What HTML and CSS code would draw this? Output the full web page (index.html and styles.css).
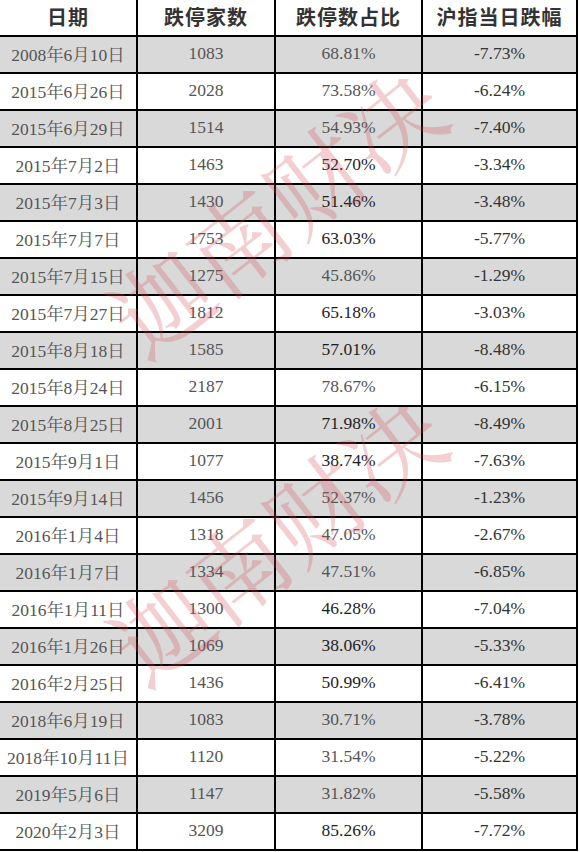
FILE: index.html
```html
<!DOCTYPE html>
<html lang="zh-CN">
<head>
    <meta charset="UTF-8">
    <title>跌停家数统计</title>
    <link rel="stylesheet" href="styles.css">
</head>
<body>
<div class="wrap">
    <div class="grid">
        <div class="th">日期</div>
        <div class="th">跌停家数</div>
        <div class="th">跌停数占比</div>
        <div class="th">沪指当日跌幅</div>

        <div class="td g">2008年6月10日</div><div class="td g">1083</div><div class="td g">68.81%</div><div class="td g">-7.73%</div>
        <div class="td">2015年6月26日</div><div class="td">2028</div><div class="td">73.58%</div><div class="td">-6.24%</div>
        <div class="td g">2015年6月29日</div><div class="td g">1514</div><div class="td g">54.93%</div><div class="td g">-7.40%</div>
        <div class="td">2015年7月2日</div><div class="td">1463</div><div class="td dk">52.70%</div><div class="td">-3.34%</div>
        <div class="td g">2015年7月3日</div><div class="td g">1430</div><div class="td g dk">51.46%</div><div class="td g">-3.48%</div>
        <div class="td">2015年7月7日</div><div class="td">1753</div><div class="td dk">63.03%</div><div class="td">-5.77%</div>
        <div class="td g">2015年7月15日</div><div class="td g">1275</div><div class="td g">45.86%</div><div class="td g">-1.29%</div>
        <div class="td">2015年7月27日</div><div class="td">1812</div><div class="td dk">65.18%</div><div class="td">-3.03%</div>
        <div class="td g">2015年8月18日</div><div class="td g">1585</div><div class="td g dk">57.01%</div><div class="td g">-8.48%</div>
        <div class="td">2015年8月24日</div><div class="td">2187</div><div class="td">78.67%</div><div class="td">-6.15%</div>
        <div class="td g">2015年8月25日</div><div class="td g">2001</div><div class="td g dk">71.98%</div><div class="td g">-8.49%</div>
        <div class="td">2015年9月1日</div><div class="td">1077</div><div class="td dk">38.74%</div><div class="td">-7.63%</div>
        <div class="td g">2015年9月14日</div><div class="td g">1456</div><div class="td g">52.37%</div><div class="td g">-1.23%</div>
        <div class="td">2016年1月4日</div><div class="td">1318</div><div class="td">47.05%</div><div class="td">-2.67%</div>
        <div class="td g">2016年1月7日</div><div class="td g">1334</div><div class="td g">47.51%</div><div class="td g">-6.85%</div>
        <div class="td">2016年1月11日</div><div class="td">1300</div><div class="td dk">46.28%</div><div class="td">-7.04%</div>
        <div class="td g">2016年1月26日</div><div class="td g">1069</div><div class="td g dk">38.06%</div><div class="td g">-5.33%</div>
        <div class="td">2016年2月25日</div><div class="td">1436</div><div class="td dk">50.99%</div><div class="td">-6.41%</div>
        <div class="td g">2018年6月19日</div><div class="td g">1083</div><div class="td g">30.71%</div><div class="td g">-3.78%</div>
        <div class="td">2018年10月11日</div><div class="td">1120</div><div class="td">31.54%</div><div class="td">-5.22%</div>
        <div class="td g">2019年5月6日</div><div class="td g">1147</div><div class="td g">31.82%</div><div class="td g">-5.58%</div>
        <div class="td">2020年2月3日</div><div class="td">3209</div><div class="td dk">85.26%</div><div class="td">-7.72%</div>
    </div>
    <!-- 水印 -->
    <div class="mark m1">迦南财决</div>
    <div class="mark m2">迦南财决</div>
</div>
</body>
</html>
```

FILE: styles.css
```css
*{
    padding: 0;
    margin: 0;
    box-sizing: border-box;
}
body{
    background: #fff;
    font-family: "Liberation Serif", "Noto Serif CJK SC", serif;
}
.wrap{
    position: relative;
    width: 580px;
    height: 852px;
    overflow: hidden;
}
.grid{
    display: grid;
    grid-template-columns: 138px 138px 147px 155px;
    grid-auto-rows: 37px;
}
.th, .td{
    display: flex;
    align-items: center;
    justify-content: center;
    border-right: 2px solid #000;
    border-bottom: 2px solid #000;
    padding-bottom: 2px;
    white-space: nowrap;
}
.th{
    font-family: "Noto Sans CJK SC", sans-serif;
    font-weight: bold;
    font-size: 20px;
    color: #333;
    letter-spacing: 1px;
}
.td{
    font-family: "Liberation Serif", "Noto Serif CJK SC", serif;
    font-size: 17.5px;
    color: #555;
}
.td:nth-child(4n){
    color: #333;
}
.td.dk{
    color: #1e1e1e;
}
.g{
    background: #d9d9d9;
}
.mark{
    position: absolute;
    font-family: "Noto Serif CJK SC", serif;
    font-size: 98px;
    letter-spacing: 0;
    color: rgba(214, 70, 80, 0.26);
    white-space: nowrap;
    transform: translate(-50%, -50%) rotate(-38deg);
    pointer-events: none;
}
.m1{
    left: 274px;
    top: 208px;
}
.m2{
    left: 274px;
    top: 536px;
}
```
